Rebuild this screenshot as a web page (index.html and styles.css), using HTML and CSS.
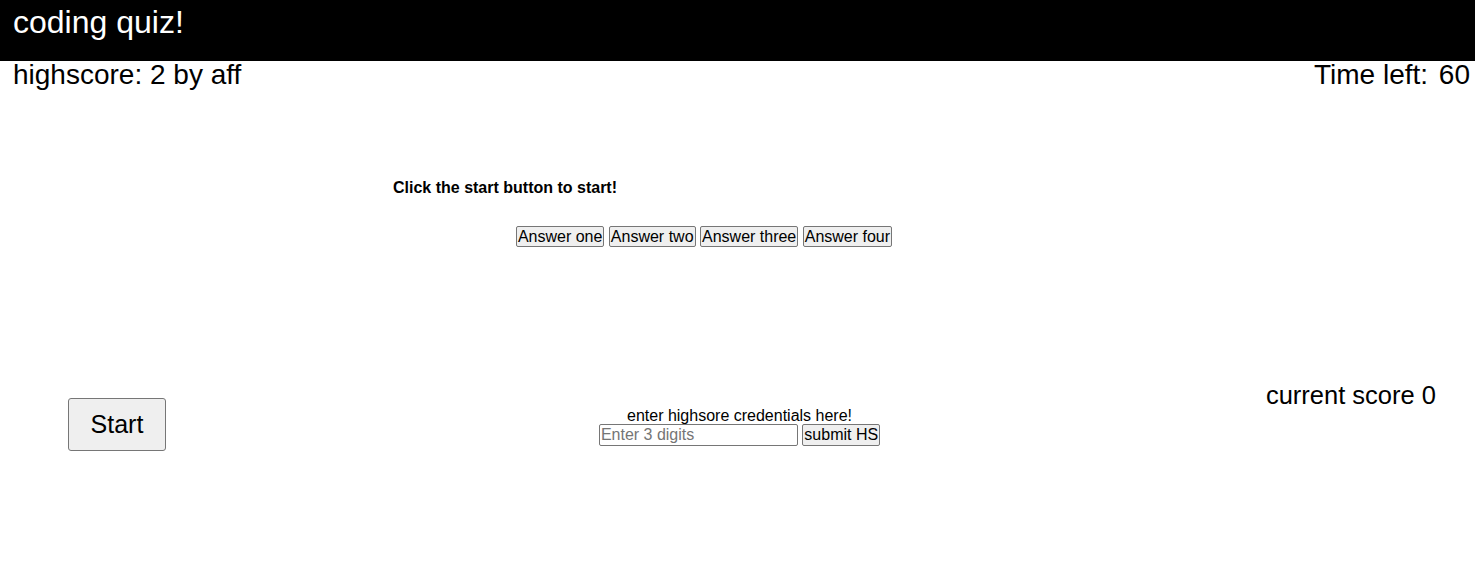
FILE: index.html
```html
<!DOCTYPE html>
<html lang="en">
<head>
    <meta charset="UTF-8">
    <meta name="viewport" content="width=device-width, initial-scale=1.0">
    <title>Coding Quiz</title>
    <link rel="stylesheet" href="styles.css">
</head>
<body>

<header class="top-bar">
    <h1>coding quiz!</h1>
</header>

<div class="status-row">
    <p class="highscore">highscore: 2 by aff</p>
    <p class="timer">Time left: <span id="time">60</span></p>
</div>

<div class="quiz">
    <p class="question" id="question">Click the start button to start!</p>
    <div class="answers">
        <button class="answer">Answer one</button>
        <button class="answer">Answer two</button>
        <button class="answer">Answer three</button>
        <button class="answer">Answer four</button>
    </div>
</div>

<div class="bottom-row">
    <div class="start-cell">
        <button class="start-btn" id="start">Start</button>
    </div>
    <form class="hs-form">
        <label for="initials">enter highsore credentials here!</label>
        <div>
            <input type="text" id="initials" placeholder="Enter 3 digits">
            <button type="submit" class="submit-btn">submit HS</button>
        </div>
    </form>
    <p class="score">current score 0</p>
</div>

</body>
</html>
```

FILE: styles.css
```css
/* Page */
body {
    margin: 0;
    font-family: 'Liberation Sans', Arial, sans-serif;
    color: black;
    background: white;
}

/* Header */
.top-bar {
    background: black;
    height: 61px;
    padding: 0 13px;
}
.top-bar h1 {
    margin: 0;
    padding-top: 3px;
    color: white;
    font-size: 32px;
    font-weight: normal;
    line-height: 38px;
}

/* Highscore and timer */
.status-row {
    display: flex;
    justify-content: space-between;
    padding: 0 5px 0 13px;
    font-size: 28px;
}
.status-row p {
    margin: 0;
    line-height: 28px;
}
.timer span {
    margin-left: 3px;
}

/* Question area */
.quiz {
    width: 622px;
    margin: 90px 0 0 393px;
}
.question {
    margin: 0;
    font-size: 16px;
    font-weight: bold;
    line-height: 18px;
}
.answers {
    margin-top: 29px;
    text-align: center;
}
button {
    font-family: 'Liberation Sans', Arial, sans-serif;
    background: #efefef;
    border: 1px solid #767676;
    border-radius: 2px;
    color: black;
}
.answer {
    font-size: 16px;
    padding: 0 1px;
    height: 21px;
    line-height: 18px;
}

/* Bottom row */
.bottom-row {
    display: grid;
    grid-template-columns: 1fr auto 1fr;
    align-items: start;
    margin-top: 129px;
    padding: 0 39px 0 43px;
}
.start-cell {
    padding: 22px 0 0 25px;
}
.start-btn {
    width: 98px;
    height: 53px;
    font-size: 25px;
    border-radius: 3px;
}
.hs-form {
    margin-top: 31px;
    text-align: center;
    font-size: 16px;
}
.hs-form label {
    display: block;
    line-height: 17px;
}
.hs-form input {
    width: 199px;
    height: 22px;
    box-sizing: border-box;
    padding: 1px 1px;
    font-family: 'Liberation Sans', Arial, sans-serif;
    font-size: 16px;
    border: 1px solid #767676;
    border-radius: 2px;
}
.hs-form input::placeholder {
    color: #757575;
}
.submit-btn {
    font-size: 16px;
    height: 22px;
    padding: 0 1px;
}
.score {
    justify-self: end;
    margin: 6px 0 0;
    font-size: 25.5px;
    line-height: 26px;
}
```
